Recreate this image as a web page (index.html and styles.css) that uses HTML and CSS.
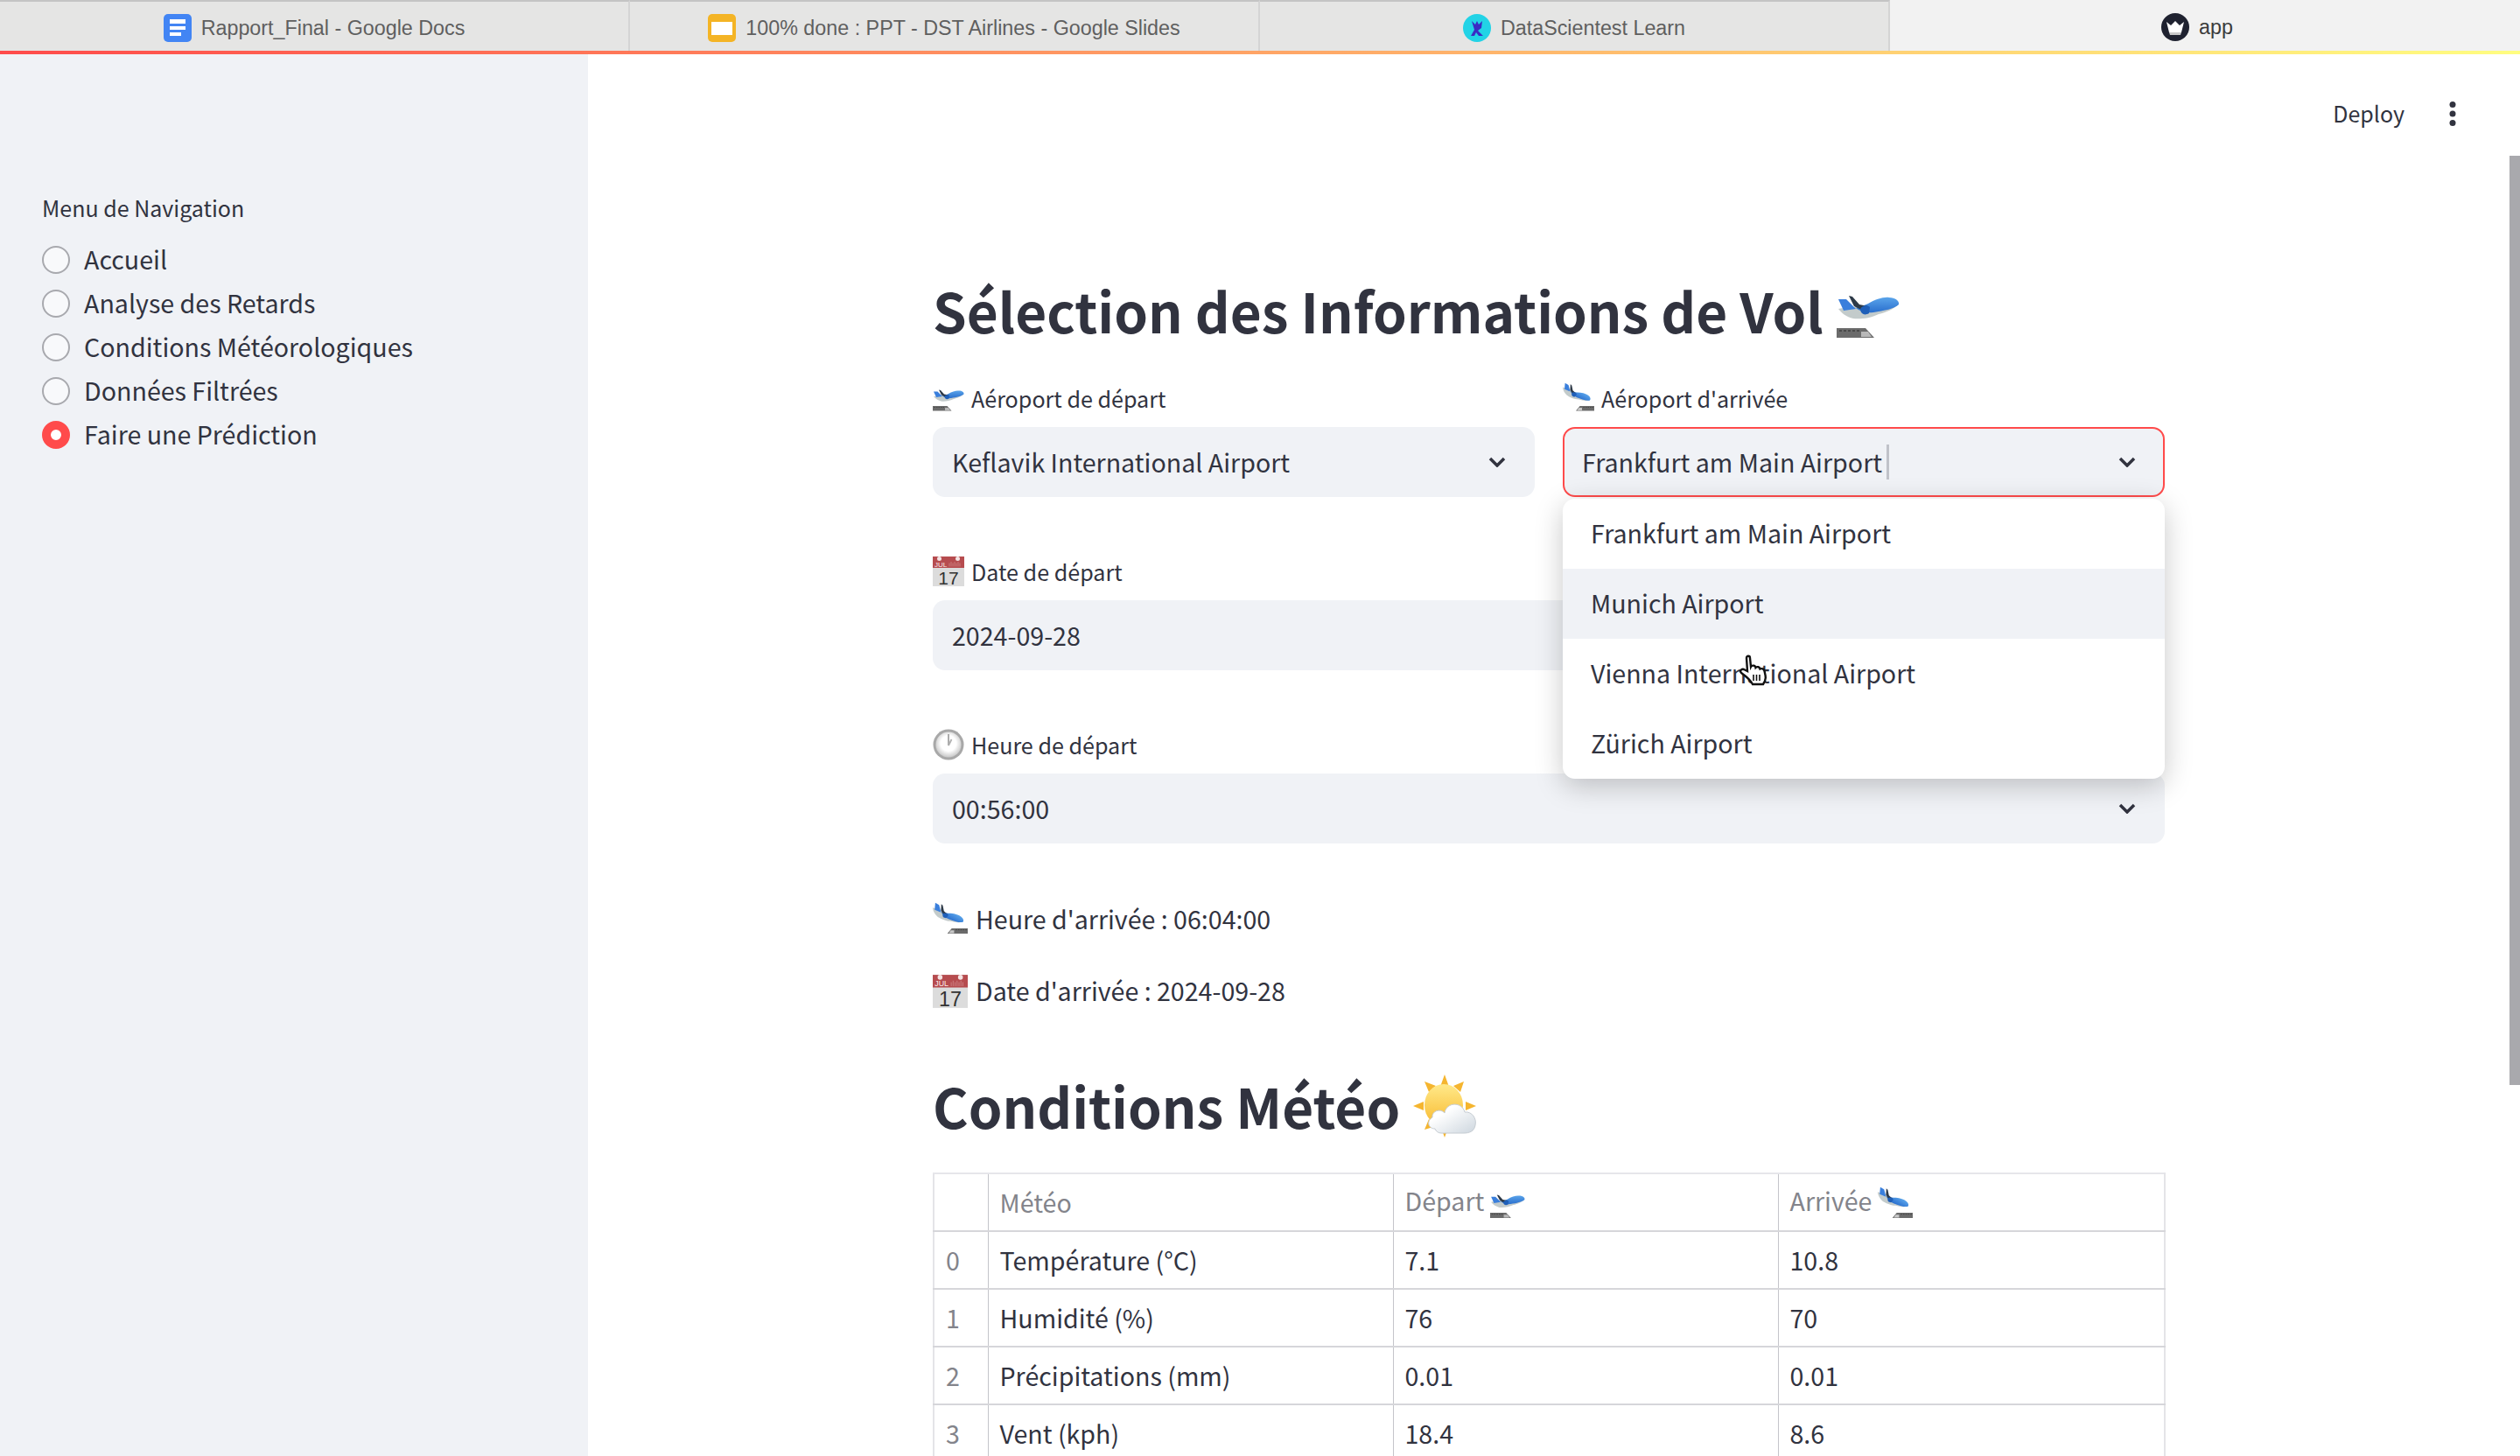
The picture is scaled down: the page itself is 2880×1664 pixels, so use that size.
FILE: index.html
```html
<!DOCTYPE html>
<html lang="fr">
<head>
  <meta charset="UTF-8">
  <meta name="viewport" content="width=device-width, initial-scale=1.0">
  <title>app</title>
  <link rel="stylesheet" href="styles.css">
</head>
<body>
  <!-- Emoji sprites -->
  <svg class="sprite" xmlns="http://www.w3.org/2000/svg">
    <defs>
      <linearGradient id="sun-fill" x1="0" y1="0" x2="0" y2="1">
        <stop offset="0" stop-color="#ffe98a"/>
        <stop offset="1" stop-color="#f8b92e"/>
      </linearGradient>
      <linearGradient id="cloud-fill" x1="0" y1="0" x2="1" y2="1">
        <stop offset="0.3" stop-color="#ffffff"/>
        <stop offset="1" stop-color="#cdd6de"/>
      </linearGradient>
      <linearGradient id="plane-fill" x1="0" y1="0" x2="0" y2="1">
        <stop offset="0" stop-color="#5aa4ea"/>
        <stop offset="1" stop-color="#2a6fce"/>
      </linearGradient>
      <radialGradient id="clock-fill" cx="0.5" cy="0.45" r="0.55">
        <stop offset="0.55" stop-color="#ffffff"/>
        <stop offset="1" stop-color="#c8c8c8"/>
      </radialGradient>
      <g id="plane">
        <path d="M2 32 C12 30 28 30 36 28 C44 24 54 20 60 21 C66 21 71 24 70 27 C66 32 56 36 48 38 C38 43 26 44 19 43 C11 41 6 37 2 32 Z" fill="#c3cbcb"/>
        <path d="M2 21 L11 21 L22 32 L8 34 Z" fill="#3a7fdc"/>
        <path d="M22 31 C28 29 32 28 36 26 C44 21 54 18 60 19 C67 19 72 23 71 27 C66 32 54 34 42 36 C34 37 27 35 22 31 Z" fill="url(#plane-fill)"/>
        <path d="M14 17 L18 18 L26 27 L36 29 L30 34 L20 29 Z" fill="#2e3a48"/>
        <path d="M27 33 C28 28 35 27 38 30 L37 37 C32 40 28 38 27 33 Z" fill="#1f5fb8"/>
      </g>
      <symbol id="plane-dep" viewBox="0 0 72 72">
        <use href="#plane"/>
        <path d="M0 54 L33 54 L43 65 L0 65 Z" fill="#6b6b6b"/>
        <path d="M28 58 L36 58 L40 64 L28 64 Z" fill="#b8b8b8"/>
        <path d="M3 57 H27" stroke="#3f3f3f" stroke-width="1.5" stroke-dasharray="3 2"/>
      </symbol>
      <symbol id="plane-arr" viewBox="0 0 72 72">
        <g transform="translate(-6 -7) rotate(30 30 32)"><use href="#plane"/></g>
        <path d="M39 54 L72 54 L72 65 L30 65 Z" fill="#6b6b6b"/>
        <path d="M37 58 L44 58 L44 64 L33 64 Z" fill="#c8c8c8"/>
        <path d="M47 57 H70" stroke="#3f3f3f" stroke-width="1.5" stroke-dasharray="3 2"/>
      </symbol>
      <symbol id="calendar" viewBox="0 0 72 72">
        <rect x="0" y="2" width="72" height="68" fill="#dcdcdc"/>
        <rect x="0" y="2" width="72" height="26" fill="#b64c4f"/>
        <circle cx="15" cy="7" r="5" fill="#f4e4e4"/>
        <circle cx="57" cy="7" r="5" fill="#f4e4e4"/>
        <text class="cal-month" x="4" y="25">JUL</text>
        <path d="M38 25 V17 M42 25 V14 M46 25 V17 M50 25 V14 M54 25 V17 M58 25 V14 M62 25 V17" stroke="#c97a7c" stroke-width="2"/>
        <text class="cal-day" x="36" y="66">17</text>
      </symbol>
      <symbol id="clock" viewBox="0 0 72 72">
        <circle cx="36" cy="36" r="35" fill="#a8a8a8"/>
        <circle cx="36" cy="36" r="29" fill="url(#clock-fill)"/>
        <path d="M36 38 L36 12" stroke="#a0a0a0" stroke-width="3.5"/>
        <path d="M36 38 L43 24" stroke="#b0b0b0" stroke-width="3.5"/>
      </symbol>
      <symbol id="sun-cloud" viewBox="0 0 72 72">
        <path d="M36 0 L41 14 H31 Z M13 8 L26 13 L18 20 Z M58 8 L54 20 L46 13 Z M0 36 L12 31 V41 Z M72 36 L60 31 V41 Z M13 63 L18 51 L26 59 Z M36 72 L31 58 H41 Z" fill="#f5b52f"/>
        <ellipse cx="35" cy="35" rx="22" ry="24" fill="url(#sun-fill)"/>
        <path d="M25 62 C17 62 15 53 22 49 C21 42 31 38 36 44 C38 31 56 31 59 43 C67 42 73 50 71 58 C70 65 64 67 58 67 L32 67 C29 67 26 65 25 62 Z" fill="url(#cloud-fill)" stroke="#c6ccd2" stroke-width="1"/>
      </symbol>
    </defs>
  </svg>

  <!-- Browser tabs -->
  <div class="tabs">
    <div class="tab">
      <svg class="tab-icon" viewBox="0 0 32 32"><rect x="0" y="0" width="32" height="32" rx="5" fill="#4285f4"/><path d="M7 6 H25 V11 H7 Z M7 14 H25 V18 H7 Z M7 21 H20 V25 H7 Z" fill="#fff"/></svg>
      <span>Rapport_Final - Google Docs</span>
    </div>
    <div class="tab">
      <svg class="tab-icon" viewBox="0 0 32 32"><rect x="0" y="0" width="32" height="32" rx="5" fill="#f4b425"/><rect x="4" y="9" width="24" height="15" fill="#fff"/></svg>
      <span>100% done : PPT - DST Airlines - Google Slides</span>
    </div>
    <div class="tab">
      <svg class="tab-icon" viewBox="0 0 32 32"><circle cx="16" cy="16" r="16" fill="#22d3e6"/><path d="M10 8 L14 12 L16 8 L18 12 L22 8 L21 16 L17 19 L23 25 H18 L15 21 L13 25 H9 L13 18 Z" fill="#3a2bc4"/></svg>
      <span>DataScientest Learn</span>
    </div>
    <div class="tab tab-active">
      <svg class="tab-icon" viewBox="0 0 32 32"><circle cx="16" cy="16" r="16" fill="#1f2230"/><path d="M6 10 L11 14 L16 9 L21 14 L26 10 L23 22 H9 Z" fill="#fff"/><path d="M9 22 L23 22 L22 25 H10 Z" fill="#c9c9c9"/></svg>
      <span>app</span>
    </div>
  </div>
  <div class="decoration"></div>

  <div class="app">
    <aside class="sidebar">
      <div class="nav-title">Menu de Navigation</div>
      <div class="nav-list">
        <div class="nav-item"><span class="radio"></span>Accueil</div>
        <div class="nav-item"><span class="radio"></span>Analyse des Retards</div>
        <div class="nav-item"><span class="radio"></span>Conditions Météorologiques</div>
        <div class="nav-item"><span class="radio"></span>Données Filtrées</div>
        <div class="nav-item"><span class="radio radio-on"></span>Faire une Prédiction</div>
      </div>
    </aside>

    <main class="main">
      <div class="toolbar">
        <span class="deploy">Deploy</span>
        <svg class="kebab" viewBox="0 0 20 28"><circle cx="10" cy="3.5" r="3.5"/><circle cx="10" cy="14" r="3.5"/><circle cx="10" cy="24.5" r="3.5"/></svg>
      </div>

      <div class="content">
        <h2 class="title">Sélection des Informations de Vol <svg class="emoji-lg"><use href="#plane-dep"/></svg></h2>

        <div class="columns">
          <div class="field">
            <label class="field-label"><svg class="emoji-sm"><use href="#plane-dep"/></svg>Aéroport de départ</label>
            <div class="input">
              <span>Keflavik International Airport</span>
              <svg class="chevron" viewBox="0 0 20 12"><path d="M2 2 L10 10 L18 2"/></svg>
            </div>
          </div>
          <div class="field field-open">
            <label class="field-label"><svg class="emoji-sm"><use href="#plane-arr"/></svg>Aéroport d'arrivée</label>
            <div class="input input-focus">
              <span>Frankfurt am Main Airport</span><i class="caret"></i>
              <svg class="chevron" viewBox="0 0 20 12"><path d="M2 2 L10 10 L18 2"/></svg>
            </div>
            <ul class="dropdown">
              <li>Frankfurt am Main Airport</li>
              <li class="hover">Munich Airport</li>
              <li>Vienna International Airport</li>
              <li>Zürich Airport</li>
            </ul>
          </div>
        </div>

        <div class="field field-row">
          <label class="field-label"><svg class="emoji-sm"><use href="#calendar"/></svg>Date de départ</label>
          <div class="input"><span>2024-09-28</span></div>
        </div>

        <div class="field field-row">
          <label class="field-label"><svg class="emoji-sm"><use href="#clock"/></svg>Heure de départ</label>
          <div class="input">
            <span>00:56:00</span>
            <svg class="chevron" viewBox="0 0 20 12"><path d="M2 2 L10 10 L18 2"/></svg>
          </div>
        </div>

        <p class="line line-first"><svg class="emoji-md"><use href="#plane-arr"/></svg><span>Heure d'arrivée : 06:04:00</span></p>
        <p class="line"><svg class="emoji-md"><use href="#calendar"/></svg><span>Date d'arrivée : 2024-09-28</span></p>

        <h2 class="title title-second">Conditions Météo <svg class="emoji-lg"><use href="#sun-cloud"/></svg></h2>

        <table class="meteo">
          <colgroup>
            <col class="col-idx"><col class="col-name"><col class="col-dep"><col class="col-arr">
          </colgroup>
          <thead>
            <tr>
              <th></th>
              <th>Météo</th>
              <th>Départ <svg class="emoji-md"><use href="#plane-dep"/></svg></th>
              <th>Arrivée <svg class="emoji-md"><use href="#plane-arr"/></svg></th>
            </tr>
          </thead>
          <tbody>
            <tr><td class="idx">0</td><td>Température (°C)</td><td>7.1</td><td>10.8</td></tr>
            <tr><td class="idx">1</td><td>Humidité (%)</td><td>76</td><td>70</td></tr>
            <tr><td class="idx">2</td><td>Précipitations (mm)</td><td>0.01</td><td>0.01</td></tr>
            <tr><td class="idx">3</td><td>Vent (kph)</td><td>18.4</td><td>8.6</td></tr>
          </tbody>
        </table>
      </div>
    </main>

    <div class="scrollbar"><div class="thumb"></div></div>
  </div>

  <!-- Mouse pointer over the open list -->
  <svg class="pointer" viewBox="-2 -2 34 38">
    <path d="M7 3 C7 0 11 0 11 3 L12 13 C13 11 17 11 17.5 14 C19 12.5 22 13 22.5 15.5 C24.5 14.5 27 15.5 27.5 18 C29 24 30 27 26 33 L14 33 C12 29 8 25 1 20 C-1 18 1 15 4 16 L8 18 Z"/>
    <path class="pointer-lines" d="M15 22 V29 M18.5 22 V29 M22 22 V29"/>
  </svg>
</body>
</html>
```

FILE: styles.css
```css
* {
  box-sizing: border-box;
}
html, body {
  height: 100%;
}
body {
  margin: 0;
  height: 100vh;
  overflow: hidden;
  display: flex;
  flex-direction: column;
  position: relative;
  background-color: #fff;
  color: #31333f;
  font-family: "Noto Sans CJK SC", "Source Sans Pro", "Noto Sans", sans-serif;
  font-size: 28.6px;
  line-height: 48px;
}
.sprite {
  display: block;
  width: 0;
  height: 0;
  flex: none;
}
.cal-month {
  font-family: "Liberation Sans", sans-serif;
  font-size: 16px;
  fill: #fbeaea;
}
.cal-day {
  font-family: "Liberation Sans", sans-serif;
  font-size: 42px;
  fill: #333;
  text-anchor: middle;
}

/* browser tabs */
.tabs {
  display: flex;
  height: 58px;
  flex: none;
}
.tab {
  width: 25%;
  flex: none;
  display: flex;
  align-items: center;
  justify-content: center;
  gap: 11px;
  padding-top: 4px;
  background-color: #e5e5e4;
  border-top: 2px solid #c4c4c4;
  border-right: 2px solid #d4d4d4;
  font-family: "Liberation Sans", Arial, sans-serif;
  font-size: 23.3px;
  line-height: 28px;
  color: #5f5f5f;
}
.tab-active {
  padding-right: 18px;
  background-color: #f2f2f2;
  border: 0;
  color: #3c3c3c;
}
.tab-icon {
  width: 32px;
  height: 32px;
}
.decoration {
  height: 4px;
  flex: none;
  background: linear-gradient(90deg, #ff4b4b, #fffd80);
}

/* layout */
.app {
  flex: 1;
  display: flex;
  min-height: 0;
}
.sidebar {
  width: 672px;
  flex: none;
  padding: 155px 48px 0;
  background-color: #f0f2f6;
}
.main {
  flex: 1;
  min-width: 0;
}
.scrollbar {
  width: 12px;
  flex: none;
  padding-top: 116px;
}
.thumb {
  height: 1062px;
  background-color: #a9a9ad;
}

/* sidebar */
.nav-title {
  font-size: 25px;
  line-height: 40px;
  margin-bottom: 15px;
}
.nav-item {
  display: flex;
  align-items: center;
  gap: 16px;
  height: 50px;
  padding-bottom: 3px;
}
.radio {
  width: 32px;
  height: 32px;
  margin-top: 3px;
  border: 2px solid #a8a9ae;
  border-radius: 50%;
  background-color: #f8f9fb;
}
.radio-on {
  border: 10px solid #ff4b4b;
  background-color: #fff;
}

/* toolbar */
.toolbar {
  display: flex;
  justify-content: flex-end;
  align-items: center;
  gap: 45px;
  height: 136px;
  padding-right: 55px;
}
.deploy {
  font-size: 25px;
  line-height: 40px;
  margin-bottom: 2px;
}
.kebab {
  width: 20px;
  height: 28px;
  fill: #31333f;
}

/* content */
.content {
  width: 1408px;
  margin: 0 auto;
  padding-top: 113px;
}
.title {
  display: flex;
  align-items: center;
  gap: 15px;
  margin: 0 0 38px;
  font-size: 62px;
  line-height: 86px;
  font-weight: 600;
}
.title .emoji-lg {
  margin-top: 6px;
}
.title-second {
  margin: 63px 0 34px;
}
.title-second .emoji-lg {
  margin-top: 2px;
}
.columns {
  display: grid;
  grid-template-columns: 1fr 1fr;
  gap: 32px;
}
.field {
  display: flex;
  flex-direction: column;
}
.field-open {
  position: relative;
}
.field-row {
  margin-top: 65px;
}
.field-label {
  display: flex;
  align-items: center;
  gap: 8px;
  height: 40px;
  margin-bottom: 13px;
  font-size: 25.1px;
  line-height: 40px;
}
.input {
  display: flex;
  align-items: center;
  height: 80px;
  padding: 0 33px 0 22px;
  background-color: #f0f2f6;
  border-radius: 14px;
}
.input span {
  margin-right: auto;
}
.input-focus {
  border: 2px solid #ff4b4b;
  padding-left: 20px;
  padding-right: 31px;
}
.input-focus span {
  margin-right: 5px;
}
.caret {
  width: 3px;
  height: 40px;
  margin-right: auto;
  background-color: #c0c2c9;
}
.chevron {
  width: 20px;
  height: 12px;
  fill: none;
  stroke: #31333f;
  stroke-width: 3.5;
}
.dropdown {
  position: absolute;
  top: 135px;
  left: 0;
  right: 0;
  z-index: 5;
  margin: 0;
  padding: 0;
  list-style: none;
  background-color: #fff;
  border-radius: 14px;
  overflow: hidden;
  box-shadow: 0 8px 32px rgba(0, 0, 0, 0.22);
}
.dropdown li {
  display: flex;
  align-items: center;
  height: 80px;
  padding: 0 0 2px 32px;
}
.dropdown .hover {
  background-color: #f0f2f6;
}
.line {
  display: flex;
  align-items: center;
  gap: 9px;
  height: 48px;
  margin: 34px 0 0;
}
.line span {
  margin-bottom: 3px;
}
.line-first {
  margin-top: 63px;
}
.emoji-lg {
  width: 72px;
  height: 72px;
}
.emoji-md {
  width: 40px;
  height: 40px;
}
.emoji-sm {
  width: 36px;
  height: 36px;
  flex: none;
}

/* table */
.meteo {
  width: 1407px;
  table-layout: fixed;
  border-collapse: collapse;
  font-size: 28.6px;
}
.col-idx { width: 62px; }
.col-name { width: 463px; }
.col-dep { width: 440px; }
.col-arr { width: 442px; }
.meteo th, .meteo td {
  height: 66px;
  padding: 0 13px;
  border-style: solid;
  border-width: 2px 1px;
  border-color: #d6d6da #c4c5ca;
  text-align: left;
  font-weight: 400;
  line-height: 40px;
}
.meteo th:first-child, .meteo td:first-child {
  border-left: 2px solid #e4e4e8;
}
.meteo th:last-child, .meteo td:last-child {
  border-right: 2px solid #e4e4e8;
}
.meteo thead th {
  border-top-color: #e6e6ea;
  color: #83848b;
}
.meteo th svg {
  vertical-align: middle;
}
.meteo .idx {
  color: #83848b;
}

/* pointer */
.pointer {
  position: absolute;
  left: 1986px;
  top: 747px;
  width: 36px;
  height: 38px;
  z-index: 9;
  fill: #fff;
  stroke: #111;
  stroke-width: 2.4;
}
.pointer-lines {
  fill: none;
  stroke-width: 1.6;
}
```
